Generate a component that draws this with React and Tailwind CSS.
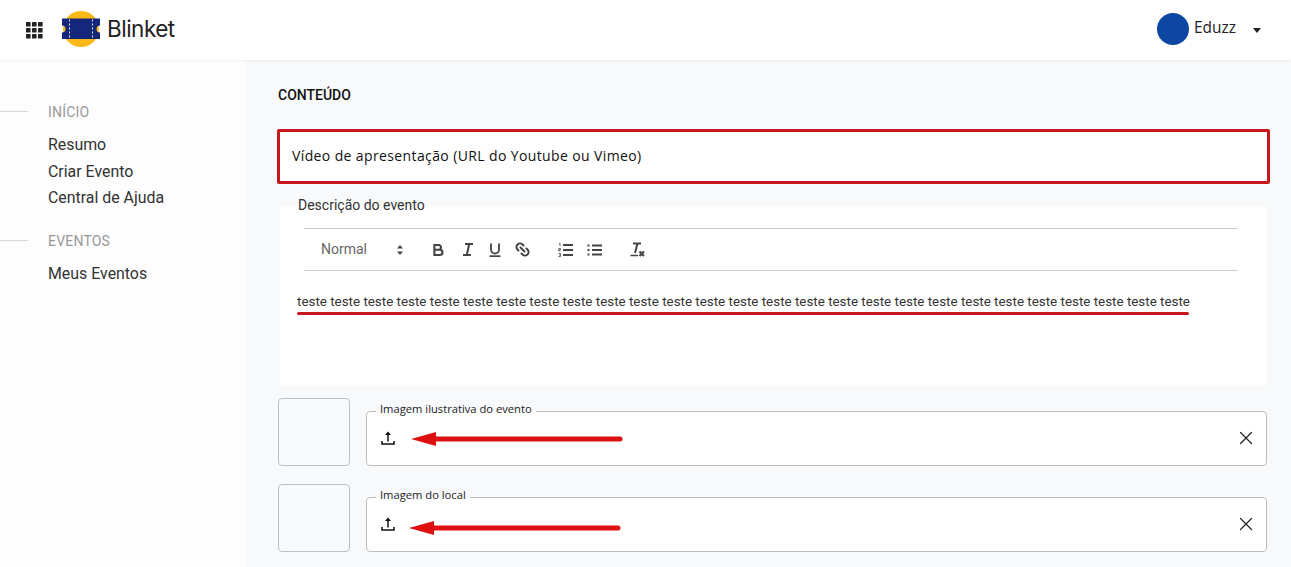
import { Link2, X } from "lucide-react";

const sidebar = [
  { title: "INÍCIO", items: ["Resumo", "Criar Evento", "Central de Ajuda"], listClass: "mt-[11px]" },
  { title: "EVENTOS", items: ["Meus Eventos"], listClass: "mt-[10px]" },
];

function Logo() {
  return (
    <svg width="40" height="38" viewBox="0 0 40 38">
      <circle cx="20" cy="19" r="18" fill="#fbb917" />
      <path d="M1 8.500h38v7a3.500 3.500 0 0 0 0 7V29H1v-6.500a3.500 3.500 0 0 0 0-7z" fill="#14277a" />
      <path d="M8.500 9.500v19M31.500 9.500v19" stroke="#dfe3f2" strokeWidth="1" strokeDasharray="2 2" />
    </svg>
  );
}

function GridIcon() {
  return (
    <svg width="17" height="17" viewBox="0 0 17 17" fill="#222">
      {[0, 6, 12].map((y) =>
        [0, 6, 12].map((x) => <rect key={`${x}-${y}`} x={x} y={y} width="4.600" height="4.600" rx="0.600" />)
      )}
    </svg>
  );
}

function UploadIcon() {
  return (
    <svg width="14" height="14" viewBox="0 0 14 14" fill="none" stroke="#111" strokeWidth="1.500">
      <path d="M1 10v3h12v-3" />
      <path d="M7 10.500V2" />
      <path d="M7 0.500L10 4H4z" fill="#111" stroke="none" />
    </svg>
  );
}

function SortIcon() {
  return (
    <svg width="8" height="12" viewBox="0 0 8 12" fill="#444">
      <path d="M4 1l3 3.500H1zM4 11l3-3.500H1z" />
    </svg>
  );
}

function BoldIcon() {
  return (
    <svg width="11" height="14" viewBox="0 0 12 14" fill="none" stroke="#444" strokeWidth="2.300">
      <path d="M1.500 1.500h5a2.700 2.700 0 0 1 0 5.300h-5zM1.500 6.800h6a2.800 2.800 0 0 1 0 5.700h-6z" />
    </svg>
  );
}

function ItalicIcon() {
  return (
    <svg width="10" height="13" viewBox="0 0 10 13" fill="none" stroke="#444" strokeWidth="2">
      <path d="M2 1h8M0 12h8M6.200 1L3.800 12" />
    </svg>
  );
}

function UnderlineIcon() {
  return (
    <svg width="12" height="14" viewBox="0 0 12 14" fill="none" stroke="#444" strokeWidth="1.800">
      <path d="M2 0.500v6a4 4 0 0 0 8 0v-6" />
      <path d="M0.500 13.200h11" />
    </svg>
  );
}

function OrderedIcon() {
  return (
    <svg width="15" height="14" viewBox="0 0 15 14" fill="none" stroke="#444">
      <path d="M5 2h10M5 7h10M5 12h10" strokeWidth="2.200" />
      <path d="M1 0.500l1-0.300v3M0.500 5.500h2v1.200h-2v1.200h2M0.500 10.500h2v3h-2M1 12h1.500" strokeWidth="0.800" />
    </svg>
  );
}

function BulletIcon() {
  return (
    <svg width="15" height="12" viewBox="0 0 15 12" fill="none" stroke="#444" strokeWidth="2.200">
      <path d="M5 1.500h10M5 6h10M5 10.500h10" />
      <path d="M0.500 1.500h2M0.500 6h2M0.500 10.500h2" />
    </svg>
  );
}

function ClearIcon() {
  return (
    <svg width="15" height="15" viewBox="0 0 15 15" fill="none" stroke="#444">
      <path d="M3 1.500h8M7.500 1.500L5 11" strokeWidth="2" />
      <path d="M0.500 13.500h7.500" strokeWidth="1.500" />
      <path d="M9.500 9.500l4.500 4.500M14 9.500l-4.500 4.500" strokeWidth="2.200" />
    </svg>
  );
}

function RedArrow({ className }) {
  return (
    <svg width="212" height="16" viewBox="0 0 212 16" className={className}>
      <path d="M0 8 L25 1 V15 Z" fill="#e00f0f" />
      <line x1="22" y1="8" x2="209" y2="8" stroke="#dc1212" strokeWidth="5" strokeLinecap="round" />
    </svg>
  );
}

function ImageRow({ label, arrowClass }) {
  return (
    <div className="flex gap-4">
      <div className="w-[72px] h-[68px] rounded-[4px] border border-[#b9c0c9]" />
      <fieldset className="relative flex-1 h-[61px] mt-[7px] rounded-[4px] border border-[#bdbdbd] bg-white px-[9px]">
        <legend className="px-[4px] h-[12px] leading-[8px] text-[11.200px] text-[#222] font-['Open_Sans',sans-serif]">{label}</legend>
        <div className="flex items-center justify-between h-[42px] pl-[5px]">
          <UploadIcon />
          <X size={22} strokeWidth={1.300} className="text-[#222]" />
        </div>
        <RedArrow className={arrowClass} />
      </fieldset>
    </div>
  );
}

export default function App() {
  return (
    <div className="h-[567px] overflow-hidden bg-[#f8f9fb] font-['Roboto',sans-serif]">
      <header className="relative z-10 h-[60px] bg-white shadow-[0_1px_3px_rgba(0,0,0,0.06)] flex items-center justify-between pl-[26px] pr-[30px]">
        <div className="flex items-center">
          <GridIcon />
          <div className="ml-[18px] flex items-center -mt-[2px]">
            <Logo />
            <span className="ml-[6px] text-[22.500px] text-[#222] font-['Inter',sans-serif] tracking-[-0.5px]">Blinket</span>
          </div>
        </div>
        <div className="flex items-center -mt-[2px]">
          <div className="w-8 h-8 rounded-full bg-[#0d47a1] -ml-px" />
          <span className="ml-[5px] w-[44px] text-[15.500px] font-medium text-[#222] -mt-[2px] font-['Open_Sans',sans-serif]">Eduzz</span>
          <span className="ml-[15px] mt-[3px] w-0 h-0 border-x-[4.500px] border-x-transparent border-t-[5px] border-t-[#222]" />
        </div>
      </header>

      <div className="flex">
        <aside className="w-[246px] h-[507px] shrink-0 bg-[#fdfdfe] pt-[43px]">
          {sidebar.map((section) => (
            <div key={section.title} className="mb-[21px]">
              <div className="flex items-center gap-[20px] h-[18px]">
                <span className="w-[28px] h-px -mt-[2px] bg-[#d9d9d9]" />
                <span className="text-[14px] text-[#999] tracking-[0.2px]">{section.title}</span>
              </div>
              <ul className={`${section.listClass} pl-[48px]`}>
                {section.items.map((item) => (
                  <li key={item} className="h-[26.500px] leading-[26.500px] text-[15.900px] text-[#333]">{item}</li>
                ))}
              </ul>
            </div>
          ))}
        </aside>

        <main className="flex-1 pl-[32px] pr-[25px]">
          <h2 className="mt-[26px] h-[18px] leading-[18px] text-[14px] font-medium text-[#111]">CONTEÚDO</h2>

          <div className="-ml-[1px] -mr-[4px] mt-[25px] h-[55px] flex items-center rounded-[2px] border-[3px] border-[#c8161d] bg-white pl-[12px] pb-[2px] text-[14px] font-medium text-[#111] tracking-[0.38px] font-['Open_Sans',sans-serif]">
            Vídeo de apresentação (URL do Youtube ou Vimeo)
          </div>

          <section className="relative ml-[2px] mt-[22px] h-[180px] rounded-[4px] bg-white">
            <span className="absolute left-[14px] -top-[10px] px-1 text-[14px] leading-[18px] text-[#333]">Descrição do evento</span>
            <div className="pt-[22px] pl-[24px] pr-[28px]">
              <div className="flex items-center h-[43px] border-y border-[#ccc] text-[#444]">
                <span className="ml-[17px] w-[75px] text-[14px] text-[#666]">Normal</span>
                <SortIcon />
                <span className="ml-[29px]"><BoldIcon /></span>
                <span className="ml-[19px]"><ItalicIcon /></span>
                <span className="ml-[16px]"><UnderlineIcon /></span>
                <Link2 size={17} strokeWidth={2.800} className="ml-[13px] rotate-45" />
                <span className="ml-[27px]"><OrderedIcon /></span>
                <span className="ml-[14px]"><BulletIcon /></span>
                <span className="ml-[28px]"><ClearIcon /></span>
              </div>
            </div>
            <p className="absolute left-[17px] top-[87px] text-[13.400px] leading-[18px] text-[#333] whitespace-nowrap">
              {Array(27).fill("teste").join(" ")}
            </p>
            <span className="absolute left-[17px] top-[106px] w-[892px] h-[3px] rounded-full bg-[#c8161d]" />
          </section>

          <div className="mt-[12px] flex flex-col gap-[18px] -mr-px">
            <ImageRow label="Imagem ilustrativa do evento" arrowClass="absolute left-[44px] top-[14px]" />
            <ImageRow label="Imagem do local" arrowClass="absolute left-[42px] top-[17px]" />
          </div>
        </main>
      </div>
    </div>
  );
}
